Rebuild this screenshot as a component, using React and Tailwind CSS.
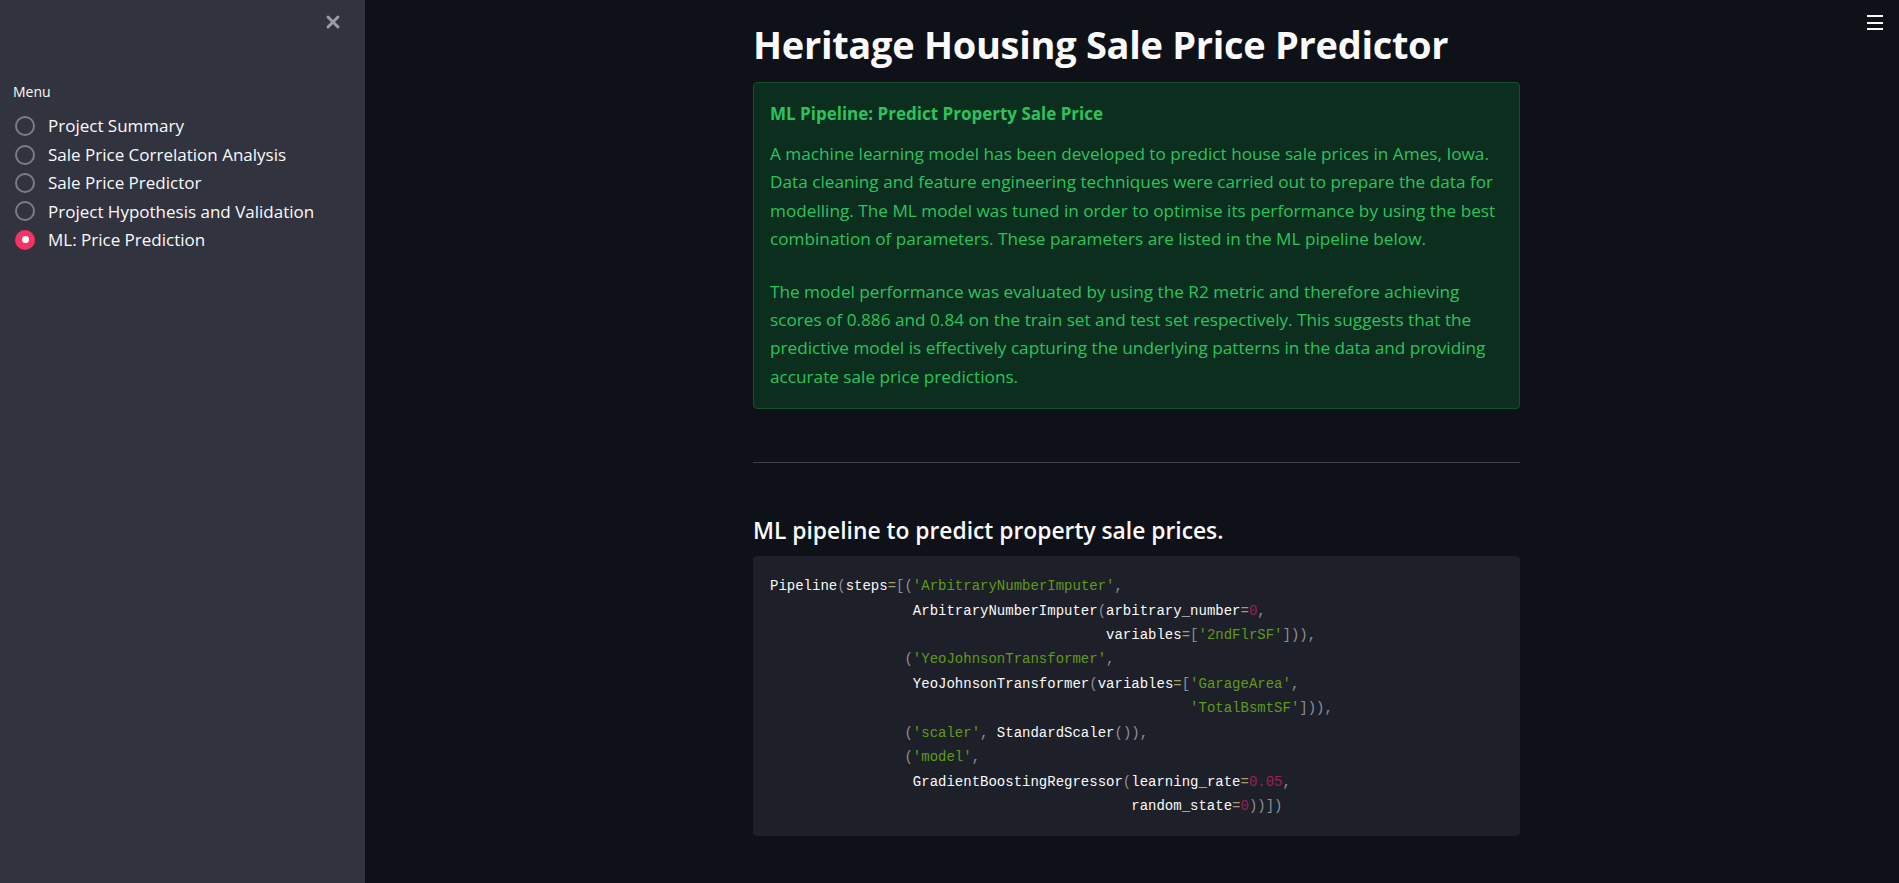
import { X } from 'lucide-react';

const menuItems = [
  'Project Summary',
  'Sale Price Correlation Analysis',
  'Sale Price Predictor',
  'Project Hypothesis and Validation',
  'ML: Price Prediction',
];

// token colours for the code block
const tone = {
  n: 'text-[#fafafa]',
  p: 'text-[#8d8f96]',
  s: 'text-[#5e9a1c]',
  o: 'text-[#a89a6a]',
  k: 'text-[#9c1f55]',
};

const codeLines = [
  [['Pipeline', 'n'], ['(', 'p'], ['steps', 'n'], ['=', 'o'], ['[(', 'p'], ["'ArbitraryNumberImputer'", 's'], [',', 'p']],
  [['                 ArbitraryNumberImputer', 'n'], ['(', 'p'], ['arbitrary_number', 'n'], ['=', 'o'], ['0', 'k'], [',', 'p']],
  [['                                        variables', 'n'], ['=', 'o'], ['[', 'p'], ["'2ndFlrSF'", 's'], ['])),', 'p']],
  [['                ', 'n'], ['(', 'p'], ["'YeoJohnsonTransformer'", 's'], [',', 'p']],
  [['                 YeoJohnsonTransformer', 'n'], ['(', 'p'], ['variables', 'n'], ['=', 'o'], ['[', 'p'], ["'GarageArea'", 's'], [',', 'p']],
  [['                                                  ', 'n'], ["'TotalBsmtSF'", 's'], ['])),', 'p']],
  [['                ', 'n'], ['(', 'p'], ["'scaler'", 's'], [', ', 'p'], ['StandardScaler', 'n'], ['()),', 'p']],
  [['                ', 'n'], ['(', 'p'], ["'model'", 's'], [',', 'p']],
  [['                 GradientBoostingRegressor', 'n'], ['(', 'p'], ['learning_rate', 'n'], ['=', 'o'], ['0.05', 'k'], [',', 'p']],
  [['                                           random_state', 'n'], ['=', 'o'], ['0', 'k'], ['))])', 'p']],
];

function Radio({ selected }) {
  if (selected) {
    return (
      <span className="w-5 h-5 rounded-full bg-[#f63366] flex items-center justify-center shrink-0">
        <span className="w-[7px] h-[7px] rounded-full bg-white" />
      </span>
    );
  }
  return <span className="w-5 h-5 rounded-full border-2 border-[#7b7d85] shrink-0" />;
}

function Sidebar() {
  return (
    <aside className="w-[365px] shrink-0 min-h-screen bg-[#31333f] text-[#fafafa] px-[15px]">
      <div className="flex justify-end pt-[12px] pr-[7px]">
        <X className="w-[20px] h-[20px] text-[#9a9ca6]" strokeWidth={3.5} />
      </div>
      <div className="mt-[50px] text-[14px] leading-[20px] -ml-[2px]">Menu</div>
      <div className="mt-[10px] flex flex-col">
        {menuItems.map((item, i) => (
          <div key={item} className="flex items-center gap-[13px] h-[28.4px]">
            <Radio selected={i === menuItems.length - 1} />
            <span className="text-[17px]">{item}</span>
          </div>
        ))}
      </div>
    </aside>
  );
}

export default function App() {
  return (
    <div
      className="flex min-h-screen bg-[#0e1117] text-[#fafafa]"
      style={{ fontFamily: '"Open Sans", "Noto Sans", sans-serif' }}
    >
      <Sidebar />
      <main className="flex-1 relative pl-[9px]">
        <button className="absolute right-[16px] top-[15px] flex flex-col gap-[4.5px]" aria-label="menu">
          <span className="block w-[16px] h-[2px] bg-[#fafafa]" />
          <span className="block w-[16px] h-[2px] bg-[#fafafa]" />
          <span className="block w-[16px] h-[2px] bg-[#fafafa]" />
        </button>
        <div className="w-[767px] mx-auto pb-[50px]">
          <h1 className="pt-[20px] text-[38px] leading-[48px] font-bold tracking-[-0.3px]">
            Heritage Housing Sale Price Predictor
          </h1>

          <div className="mt-[14px] rounded-[4px] border border-[#14502b] bg-[#0c2e1e] px-[16px] pt-[17px] pb-[17px] text-[#2bc45c]">
            <p className="font-bold text-[17px] leading-[28px]">ML Pipeline: Predict Property Sale Price</p>
            <p className="mt-[12px] text-[17.2px] leading-[28.4px]">
              A machine learning model has been developed to predict house sale prices in Ames, Iowa.
              Data cleaning and feature engineering techniques were carried out to prepare the data for
              modelling. The ML model was tuned in order to optimise its performance by using the best
              combination of parameters. These parameters are listed in the ML pipeline below.
            </p>
            <p className="mt-[24px] text-[17.2px] leading-[28.4px]">
              The model performance was evaluated by using the R2 metric and therefore achieving
              scores of 0.886 and 0.84 on the train set and test set respectively. This suggests that the
              predictive model is effectively capturing the underlying patterns in the data and providing
              accurate sale price predictions.
            </p>
          </div>

          <hr className="mt-[53px] border-0 h-px bg-[#3d3f45]" />

          <h3 className="mt-[54px] text-[22.8px] leading-[28px] font-semibold">
            ML pipeline to predict property sale prices.
          </h3>

          <pre
            className="mt-[11px] rounded-[4px] bg-[#1e2029] pl-[17px] pr-4 py-[18px] text-[14px] leading-[24.4px]"
            style={{ fontFamily: '"Liberation Mono", "DejaVu Sans Mono", monospace' }}
          >
            {codeLines.map((line, i) => (
              <div key={i}>
                {line.map(([text, t], j) => (
                  <span key={j} className={tone[t]}>{text}</span>
                ))}
              </div>
            ))}
          </pre>
        </div>
      </main>
    </div>
  );
}
